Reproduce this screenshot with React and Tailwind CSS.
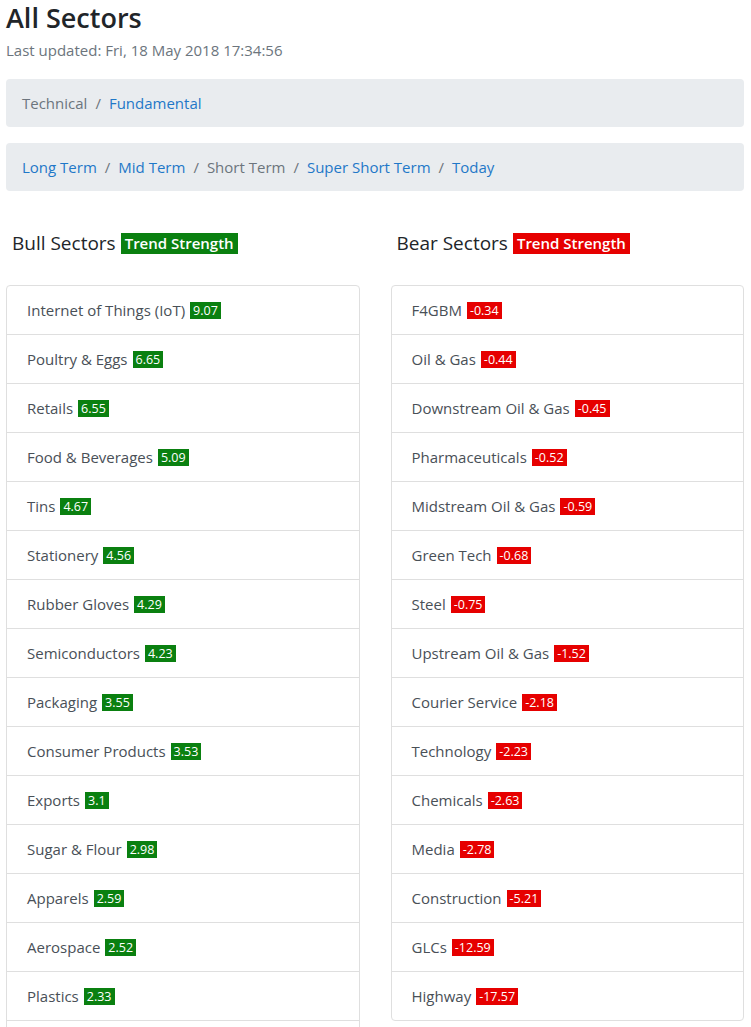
import React from "react";

const bull = [
  ["Internet of Things (IoT)", "9.07"],
  ["Poultry & Eggs", "6.65"],
  ["Retails", "6.55"],
  ["Food & Beverages", "5.09"],
  ["Tins", "4.67"],
  ["Stationery", "4.56"],
  ["Rubber Gloves", "4.29"],
  ["Semiconductors", "4.23"],
  ["Packaging", "3.55"],
  ["Consumer Products", "3.53"],
  ["Exports", "3.1"],
  ["Sugar & Flour", "2.98"],
  ["Apparels", "2.59"],
  ["Aerospace", "2.52"],
  ["Plastics", "2.33"],
  ["", ""],
];

const bear = [
  ["F4GBM", "-0.34"],
  ["Oil & Gas", "-0.44"],
  ["Downstream Oil & Gas", "-0.45"],
  ["Pharmaceuticals", "-0.52"],
  ["Midstream Oil & Gas", "-0.59"],
  ["Green Tech", "-0.68"],
  ["Steel", "-0.75"],
  ["Upstream Oil & Gas", "-1.52"],
  ["Courier Service", "-2.18"],
  ["Technology", "-2.23"],
  ["Chemicals", "-2.63"],
  ["Media", "-2.78"],
  ["Construction", "-5.21"],
  ["GLCs", "-12.59"],
  ["Highway", "-17.57"],
];

function Crumbs({ items }) {
  return (
    <div className="flex items-center h-[48px] px-4 rounded bg-[#e9ecef] text-[15px]">
      {items.map(([label, active], i) => (
        <React.Fragment key={label}>
          {i > 0 && <span className="px-2 text-[#6c757d]">/</span>}
          <span className={active ? "text-[#6c757d]" : "text-[#1f78c8]"}>{label}</span>
        </React.Fragment>
      ))}
    </div>
  );
}

function Column({ title, badgeClass, items }) {
  return (
    <div className="flex flex-col">
      <div className="flex items-center h-[22px] mt-[41px] pl-[6px] gap-[5px]">
        <span className="text-[19px] font-medium text-[#212529]">{title}</span>
        <span className={`${badgeClass} text-white text-[15px] font-semibold px-[4px] leading-[21px]`}>
          Trend Strength
        </span>
      </div>
      <div className="mt-[31px] border border-[#dfdfdf] rounded-[4px] bg-white">
        {items.map(([name, val], i) => (
          <div
            key={i}
            className={`flex items-center h-[48px] pl-[20px] text-[15px] text-[#495057] ${i > 0 ? "border-t border-[#dfdfdf] h-[49px]" : ""}`}
          >
            {name && <span>{name}</span>}
            {val && (
              <span className={`${badgeClass} ml-[5px] text-white text-[12.5px] leading-[17px] px-[3px]`}>{val}</span>
            )}
          </div>
        ))}
      </div>
    </div>
  );
}

export default function App() {
  return (
    <div
      className="w-[751px] h-[1027px] overflow-hidden bg-white pl-[6px] pr-[7px]"
      style={{ fontFamily: '"Open Sans", "Noto Sans", sans-serif' }}
    >
      <h1 className="text-[27px] font-semibold text-[#212529] leading-[36px]">All Sectors</h1>
      <div className="text-[15px] text-[#6c757d] leading-[26px] mt-[1px]">Last updated: Fri, 18 May 2018 17:34:56</div>
      <div className="mt-[16px]">
        <Crumbs items={[["Technical", true], ["Fundamental", false]]} />
      </div>
      <div className="mt-[16px]">
        <Crumbs
          items={[
            ["Long Term", false],
            ["Mid Term", false],
            ["Short Term", true],
            ["Super Short Term", false],
            ["Today", false],
          ]}
        />
      </div>
      <div className="grid grid-cols-2 gap-[31px]">
        <Column title="Bull Sectors" badgeClass="bg-[#0a8010]" items={bull} />
        <Column title="Bear Sectors" badgeClass="bg-[#e60000]" items={bear} />
      </div>
    </div>
  );
}
